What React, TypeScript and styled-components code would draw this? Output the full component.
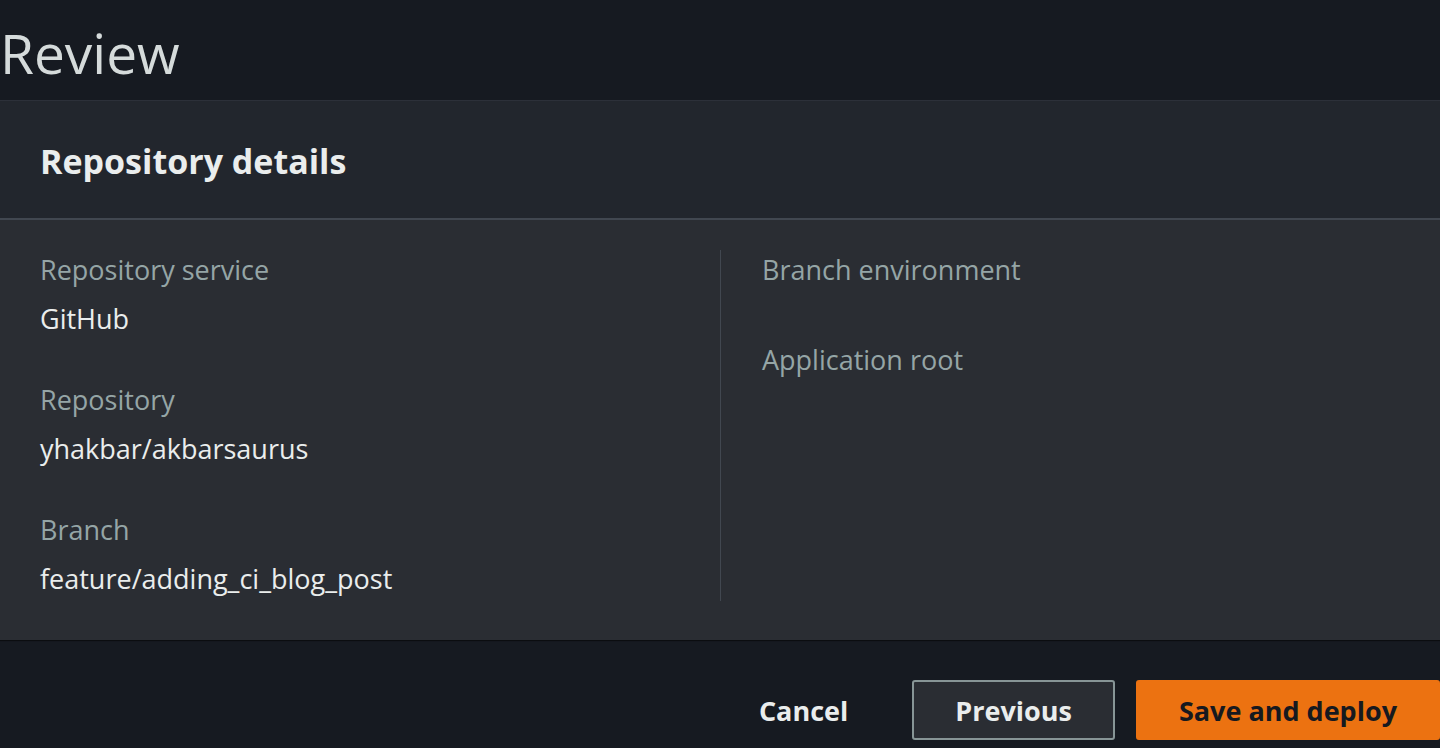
import * as React from "react";
import styled, { createGlobalStyle } from "styled-components";

const GlobalStyle = createGlobalStyle`
  html, body {
    margin: 0;
    padding: 0;
    background: #161a21;
    font-family: "Open Sans", "Liberation Sans", sans-serif;
    overflow: hidden;
  }
`;

const Page = styled.div`
  width: 1440px;
  height: 748px;
  display: flex;
  flex-direction: column;
  background: #161a21;
`;

const PageTitle = styled.h1`
  margin: 0;
  height: 101px;
  font-size: 55px;
  font-weight: 400;
  line-height: 106px;
  color: #d5dbdb;
  box-sizing: border-box;
  border-bottom: 1px solid #2c3039;
`;

const Card = styled.section`
  background: #2a2d33;
  box-shadow: 0 1px 1px rgba(0, 0, 0, 0.5);
`;

const CardHeader = styled.div`
  height: 119px;
  box-sizing: border-box;
  display: flex;
  align-items: center;
  padding: 2px 40px 0;
  background: #22262d;
  border-bottom: 2px solid #414750;
`;

const CardTitle = styled.h2`
  margin: 0;
  font-size: 34px;
  font-weight: 700;
  color: #eaeded;
`;

const CardBody = styled.div`
  display: grid;
  grid-template-columns: 1fr 1fr;
  padding: 30px 0 39px;
  height: 420px;
  box-sizing: border-box;
`;

interface IColumnProps {
  divided?: boolean;
}

const Column = styled.div<IColumnProps>`
  display: flex;
  flex-direction: column;
  gap: 41px;
  padding: 0 40px;
  ${({ divided }) =>
    divided &&
    `
    border-left: 1px solid #414750;
    padding-left: 41px;
  `}
`;

const Field = styled.div`
  display: flex;
  flex-direction: column;
`;

const Label = styled.div`
  font-size: 27px;
  line-height: 40px;
  margin-bottom: 9px;
  color: #95a5a6;
`;

const Value = styled.div`
  font-size: 27px;
  line-height: 40px;
  color: #eaeded;
`;

const Footer = styled.div`
  display: flex;
  justify-content: flex-end;
  align-items: center;
  gap: 21px;
  padding-top: 40px;
`;

type Variant = "link" | "normal" | "primary";

interface IButtonProps {
  variant: Variant;
}

const Button = styled.button<IButtonProps>`
  height: 60px;
  padding: 0 41px;
  border-radius: 3px;
  font-family: "Open Sans", "Liberation Sans", sans-serif;
  font-size: 27px;
  font-weight: 700;
  cursor: pointer;
  border: 2px solid transparent;
  background: transparent;
  color: #eaeded;

  ${({ variant }) =>
    variant === "normal" &&
    `
    border-color: #879596;
    background: #2a2d33;
  `}

  ${({ variant }) =>
    variant === "primary" &&
    `
    background: #ec7211;
    border-color: #ec7211;
    color: #16191f;
  `}
`;

interface IField {
  label: string;
  value?: string;
}

const leftFields: IField[] = [
  { label: "Repository service", value: "GitHub" },
  { label: "Repository", value: "yhakbar/akbarsaurus" },
  { label: "Branch", value: "feature/adding_ci_blog_post" },
];

const rightFields: IField[] = [
  { label: "Branch environment" },
  { label: "Application root" },
];

const renderField = (field: IField) => (
  <Field key={field.label}>
    <Label>{field.label}</Label>
    {field.value && <Value>{field.value}</Value>}
  </Field>
);

export default function App() {
  return (
    <Page>
      <GlobalStyle />
      <PageTitle>Review</PageTitle>
      <Card>
        <CardHeader>
          <CardTitle>Repository details</CardTitle>
        </CardHeader>
        <CardBody>
          <Column>{leftFields.map(renderField)}</Column>
          <Column divided>{rightFields.map(renderField)}</Column>
        </CardBody>
      </Card>
      <Footer>
        <Button variant="link">Cancel</Button>
        <Button variant="normal">Previous</Button>
        <Button variant="primary">Save and deploy</Button>
      </Footer>
    </Page>
  );
}
